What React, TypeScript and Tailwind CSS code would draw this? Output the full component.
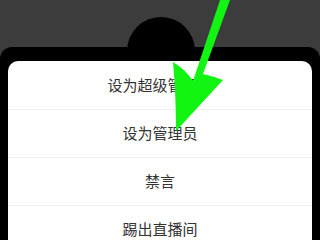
const ITEMS = ['设为超级管理员', '设为管理员', '禁言', '踢出直播间'];

const App = () => {
    return (
        <div
            className="relative w-[320px] h-[240px] overflow-hidden bg-[#3c3c3c] flex flex-col"
            style={{ fontFamily: '"Noto Sans CJK SC", "Noto Sans", sans-serif' }}
        >
            <div className="h-[47px] shrink-0" />

            <div className="relative flex-1 bg-black rounded-t-[12px] px-[8px] pt-[14px]">
                {/* round camera bump */}
                <div className="absolute -top-[30px] left-[127px] w-[68px] h-[68px] rounded-full bg-black" />

                <div className="relative bg-white rounded-t-[10px] h-full">
                    {ITEMS.map((item, i) => (
                        <div
                            key={item}
                            className={`h-[48px] flex items-center justify-center text-[15px] text-[#333333] ${i > 0 ? 'border-t border-[#eeeeee]' : ''}`}
                        >
                            {item}
                        </div>
                    ))}
                </div>
            </div>

            {/* green annotation arrow */}
            <svg className="absolute left-0 top-0 pointer-events-none" width="320" height="240" viewBox="0 0 320 240">
                <path
                    d="M220 0 L230 0 L203 74 Q212 76 223 80 L176 131 Q176 95 173 62 Q186 70 193 81 Z"
                    fill="#12f512"
                />
            </svg>
        </div>
    );
};

export default App;
